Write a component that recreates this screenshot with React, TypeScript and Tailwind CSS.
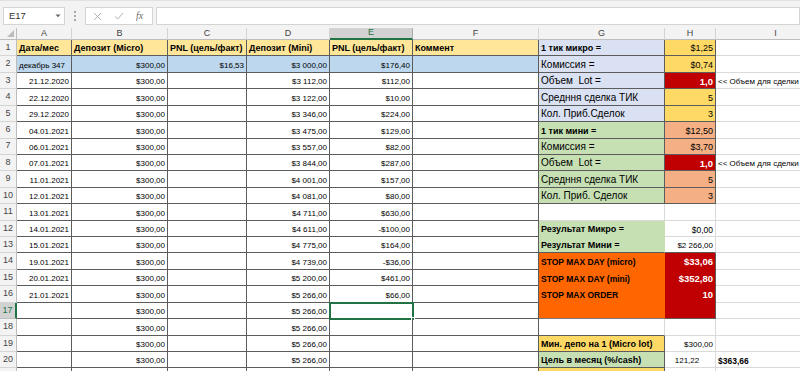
import React from 'react';

const DARK = 'border-r border-b border-[#5c5c5c]';
const LIGHT = 'border-r border-b border-[#dadada]';

const COLS = ['A', 'B', 'C', 'D', 'E', 'F', 'G', 'H', 'I'];
const COLW = ['w-[55px]', 'w-[96px]', 'w-[79px]', 'w-[83px]', 'w-[83px]', 'w-[126px]', 'w-[126px]', 'w-[51px]', 'w-[120px]'];

type Left = { a: string; b: string; c: string; d: string; e: string };

const left: Left[] = [
  { a: 'декабрь 347', b: '$300,00', c: '$16,53', d: '$3 000,00', e: '$176,40' },
  { a: '21.12.2020', b: '$300,00', c: '', d: '$3 112,00', e: '$112,00' },
  { a: '22.12.2020', b: '$300,00', c: '', d: '$3 122,00', e: '$10,00' },
  { a: '29.12.2020', b: '$300,00', c: '', d: '$3 346,00', e: '$224,00' },
  { a: '04.01.2021', b: '$300,00', c: '', d: '$3 475,00', e: '$129,00' },
  { a: '06.01.2021', b: '$300,00', c: '', d: '$3 557,00', e: '$82,00' },
  { a: '07.01.2021', b: '$300,00', c: '', d: '$3 844,00', e: '$287,00' },
  { a: '11.01.2021', b: '$300,00', c: '', d: '$4 001,00', e: '$157,00' },
  { a: '12.01.2021', b: '$300,00', c: '', d: '$4 081,00', e: '$80,00' },
  { a: '13.01.2021', b: '$300,00', c: '', d: '$4 711,00', e: '$630,00' },
  { a: '14.01.2021', b: '$300,00', c: '', d: '$4 611,00', e: '-$100,00' },
  { a: '15.01.2021', b: '$300,00', c: '', d: '$4 775,00', e: '$164,00' },
  { a: '19.01.2021', b: '$300,00', c: '', d: '$4 739,00', e: '-$36,00' },
  { a: '20.01.2021', b: '$300,00', c: '', d: '$5 200,00', e: '$461,00' },
  { a: '21.01.2021', b: '$300,00', c: '', d: '$5 266,00', e: '$66,00' },
  { a: '', b: '$300,00', c: '', d: '$5 266,00', e: '' },
  { a: '', b: '$300,00', c: '', d: '$5 266,00', e: '' },
  { a: '', b: '$300,00', c: '', d: '$5 266,00', e: '' },
  { a: '', b: '$300,00', c: '', d: '$5 266,00', e: '' },
  { a: '', b: '', c: '', d: '', e: '' },
];

type Side = {
  g: string;
  gs: string;
  gc: string;
  h: string;
  hs: string;
  hc: string;
  hCenter?: boolean;
  i?: string;
  ib?: boolean;
};

const BLUE = 'bg-[#d9e1f2] ' + DARK;
const GOLD = 'bg-[#ffd966] ' + DARK;
const GREEN = 'bg-[#c6e0b4] ' + DARK;
const SALMON = 'bg-[#f4b084] ' + DARK;
const RED = 'bg-[#c00000] text-white font-bold ' + DARK;
const ORANGE = 'bg-[#ff6600] border-r border-b border-[#ff6600]';
const REDBLK = 'bg-[#c00000] text-white font-bold border-r border-b border-r-[#5c5c5c] border-b-[#c00000]';

const LBL = 'text-[10px]';
const LBLB = 'text-[9px] font-bold';
const STOP = 'text-[8.5px] font-bold';

const side: Side[] = [
  { g: '1 тик микро =', gs: LBLB, gc: BLUE, h: '$1,25', hs: 'text-[9px]', hc: GOLD },
  { g: 'Комиссия =', gs: LBL, gc: BLUE, h: '$0,74', hs: 'text-[9px]', hc: GOLD },
  { g: 'Объем  Lot =', gs: LBL, gc: BLUE, h: '1,0', hs: 'text-[9.5px]', hc: RED, i: '<< Объем для сделки' },
  { g: 'Средння сделка ТИК', gs: LBL, gc: BLUE, h: '5', hs: 'text-[9px]', hc: GOLD },
  { g: 'Кол. Приб.Сделок', gs: LBL, gc: BLUE, h: '3', hs: 'text-[9px]', hc: GOLD },
  { g: '1 тик мини =', gs: LBLB, gc: GREEN, h: '$12,50', hs: 'text-[9px]', hc: SALMON },
  { g: 'Комиссия =', gs: LBL, gc: GREEN, h: '$3,70', hs: 'text-[9px]', hc: SALMON },
  { g: 'Объем  Lot =', gs: LBL, gc: GREEN, h: '1,0', hs: 'text-[9.5px]', hc: RED, i: '<< Объем для сделки' },
  { g: 'Средння сделка ТИК', gs: LBL, gc: GREEN, h: '5', hs: 'text-[9px]', hc: SALMON },
  { g: 'Кол. Приб. Сделок', gs: LBL, gc: GREEN, h: '3', hs: 'text-[9px]', hc: SALMON },
  { g: '', gs: LBL, gc: LIGHT, h: '', hs: '', hc: LIGHT },
  { g: 'Результат Микро =', gs: LBLB, gc: 'bg-[#c6e0b4] border-r border-b border-[#c6e0b4]', h: '$0,00', hs: 'text-[8.5px]', hc: LIGHT },
  {
    g: 'Результат Мини =',
    gs: LBLB,
    gc: 'bg-[#c6e0b4] border-r border-b border-r-[#c6e0b4] border-b-[#5c5c5c]',
    h: '$2 266,00',
    hs: 'text-[8px]',
    hc: 'border-r border-b border-r-[#dadada] border-b-[#5c5c5c]',
  },
  { g: 'STOP MAX DAY (micro)', gs: STOP, gc: ORANGE, h: '$33,06', hs: 'text-[9.5px]', hc: REDBLK },
  { g: 'STOP MAX DAY (mini)', gs: STOP, gc: ORANGE, h: '$352,80', hs: 'text-[9.5px]', hc: REDBLK },
  { g: 'STOP MAX ORDER', gs: STOP, gc: ORANGE, h: '10', hs: 'text-[9.5px]', hc: REDBLK },
  { g: '', gs: STOP, gc: 'bg-[#ff6600] border-r border-b border-r-[#ff6600] border-b-[#7a7a7a]', h: '', hs: '', hc: RED },
  { g: '', gs: LBL, gc: 'border-r border-b border-r-[#dadada] border-b-[#5c5c5c]', h: '', hs: '', hc: LIGHT },
  { g: 'Мин. депо на 1 (Micro lot)', gs: LBLB, gc: GOLD, h: '$300,00', hs: 'text-[8px]', hc: LIGHT },
  { g: 'Цель в месяц (%/cash)', gs: LBLB, gc: GREEN, h: '121,22', hs: 'text-[8px]', hc: LIGHT, hCenter: true, i: '$363,66', ib: true },
  { g: '', gs: LBL, gc: GOLD, h: '', hs: '', hc: LIGHT },
];

const Cell = ({ w, cls = '', right, center, children }: { w: string; cls?: string; right?: boolean; center?: boolean; children?: React.ReactNode }) => (
  <div
    className={`${w} h-full shrink-0 flex items-end pb-[2px] leading-none whitespace-pre overflow-hidden ${
      center ? 'justify-center pr-[6px]' : right ? 'justify-end pr-[2px]' : 'justify-start pl-[2px]'
    } ${cls}`}
  >
    {children}
  </div>
);

const RowHead = ({ n, active }: { n: number; active?: boolean }) => (
  <div
    className={`w-[17px] h-full shrink-0 flex items-center justify-center text-[9px] border-b ${
      active
        ? 'bg-[#d2d2d2] text-[#217346] border-r-2 border-r-[#217346] border-b-[#c0c0c0]'
        : 'bg-[#f3f3f3] text-[#444] border-r border-r-[#bdbdbd] border-b-[#d4d4d4]'
    }`}
  >
    {n < 21 ? n : ''}
  </div>
);

export default function App() {
  return (
    <div className="w-[800px] h-[371px] overflow-hidden bg-white font-['Liberation_Sans',Arial,sans-serif] text-black select-none">
      {/* formula bar */}
      <div className="h-[28px] bg-[#f3f3f3] border-t border-[#e1e1e1] flex items-start pt-[6px]">
        <div className="ml-[3px] w-[62px] h-[18px] bg-white border border-[#d4d4d4] flex items-center justify-between pl-[5px] pr-[3px] text-[9.5px] text-[#333]">
          <span>E17</span>
          <svg width="6" height="4" viewBox="0 0 6 4">
            <path d="M0.5 0.5 L3 3.2 L5.5 0.5 Z" fill="#666" />
          </svg>
        </div>
        <div className="w-[20px] h-[18px] flex flex-col items-center justify-center gap-[2px]">
          <span className="w-[2px] h-[2px] bg-[#a8a8a8]" />
          <span className="w-[2px] h-[2px] bg-[#a8a8a8]" />
          <span className="w-[2px] h-[2px] bg-[#a8a8a8]" />
        </div>
        <div className="w-[68px] h-[18px] bg-white border border-[#d4d4d4] flex items-center pl-[7px] gap-[12px]">
          <svg width="9" height="9" viewBox="0 0 9 9">
            <path d="M1 1 L8 8 M8 1 L1 8" stroke="#b4b4b4" strokeWidth="1" />
          </svg>
          <svg width="10" height="8" viewBox="0 0 10 8">
            <path d="M1 4.5 L3.8 7 L9 1" stroke="#b4b4b4" strokeWidth="1" fill="none" />
          </svg>
          <span className="text-[10px] italic font-['Liberation_Serif',serif] text-[#6b6b6b] leading-none">fx</span>
        </div>
        <div className="ml-[3px] flex-1 h-[18px] bg-white border border-[#d4d4d4]" />
      </div>

      {/* column headers */}
      <div className="h-[12px] flex bg-[#f3f3f3]">
        <div className="w-[17px] h-full shrink-0 border-r border-b border-[#bdbdbd] relative">
          <svg className="absolute right-[2px] bottom-[2px]" width="7" height="7" viewBox="0 0 7 7">
            <path d="M7 0 L7 7 L0 7 Z" fill="#bcbcbc" />
          </svg>
        </div>
        {COLS.map((c, i) => (
          <div
            key={c}
            className={`${COLW[i]} h-full shrink-0 flex items-center justify-center text-[9px] border-r ${
              c === 'E'
                ? 'bg-[#d2d2d2] text-[#217346] border-r-[#ababab] border-b-2 border-b-[#217346]'
                : 'text-[#444] border-r-[#d4d4d4] border-b border-b-[#bdbdbd]'
            }`}
          >
            {c}
          </div>
        ))}
      </div>

      {/* row 1 */}
      <div className="h-[16.43px] flex">
        <RowHead n={1} />
        {['Дата/мес', 'Депозит (Micro)', 'PNL (цель/факт)', 'Депозит (Mini)', 'PNL (цель/факт)', 'Коммент'].map((t, i) => (
          <Cell key={i} w={COLW[i]} cls={`bg-[#ffe699] font-bold text-[9px] ${DARK}`}>
            {t}
          </Cell>
        ))}
        <Cell w={COLW[6]} cls={`${side[0].gc} ${side[0].gs}`}>
          {side[0].g}
        </Cell>
        <Cell w={COLW[7]} right cls={`${side[0].hc} ${side[0].hs}`}>
          {side[0].h}
        </Cell>
        <Cell w={COLW[8]} cls={LIGHT} />
      </div>

      {left.map((r, idx) => {
        const n = idx + 2;
        const s = side[idx + 1];
        const blue = n === 2 ? 'bg-[#bdd7ee] ' : '';
        return (
          <div key={n} className="h-[16.43px] flex">
            <RowHead n={n} active={n === 17} />
            <Cell w={COLW[0]} right={n !== 2} cls={`${blue}${DARK} text-[8px]`}>
              {r.a}
            </Cell>
            <Cell w={COLW[1]} right cls={`${blue}${DARK} text-[8px]`}>
              {r.b}
            </Cell>
            <Cell w={COLW[2]} right cls={`${blue}${DARK} text-[8px]`}>
              {r.c}
            </Cell>
            <Cell w={COLW[3]} right cls={`${blue}${DARK} text-[8px]`}>
              {r.d}
            </Cell>
            <div className="relative h-full shrink-0">
              <Cell w={COLW[4]} right cls={`${blue}${DARK} text-[8px]`}>
                {r.e}
              </Cell>
              {n === 17 && (
                <div className="absolute -left-px -top-px w-[85px] h-[18.4px] border-2 border-[#217346]">
                  <div className="absolute -right-[3px] -bottom-[3px] w-[4px] h-[4px] bg-[#217346] border border-white" />
                </div>
              )}
            </div>
            <Cell w={COLW[5]} cls={`${blue}${DARK}`} />
            <Cell w={COLW[6]} cls={`${s.gc} ${s.gs}`}>
              {s.g}
            </Cell>
            <Cell w={COLW[7]} right center={s.hCenter} cls={`${s.hc} ${s.hs}`}>
              {s.h}
            </Cell>
            <Cell w={COLW[8]} cls={`${LIGHT} ${s.ib ? 'font-bold text-[8.5px]' : 'text-[8px]'}`}>
              {s.i}
            </Cell>
          </div>
        );
      })}
    </div>
  );
}
